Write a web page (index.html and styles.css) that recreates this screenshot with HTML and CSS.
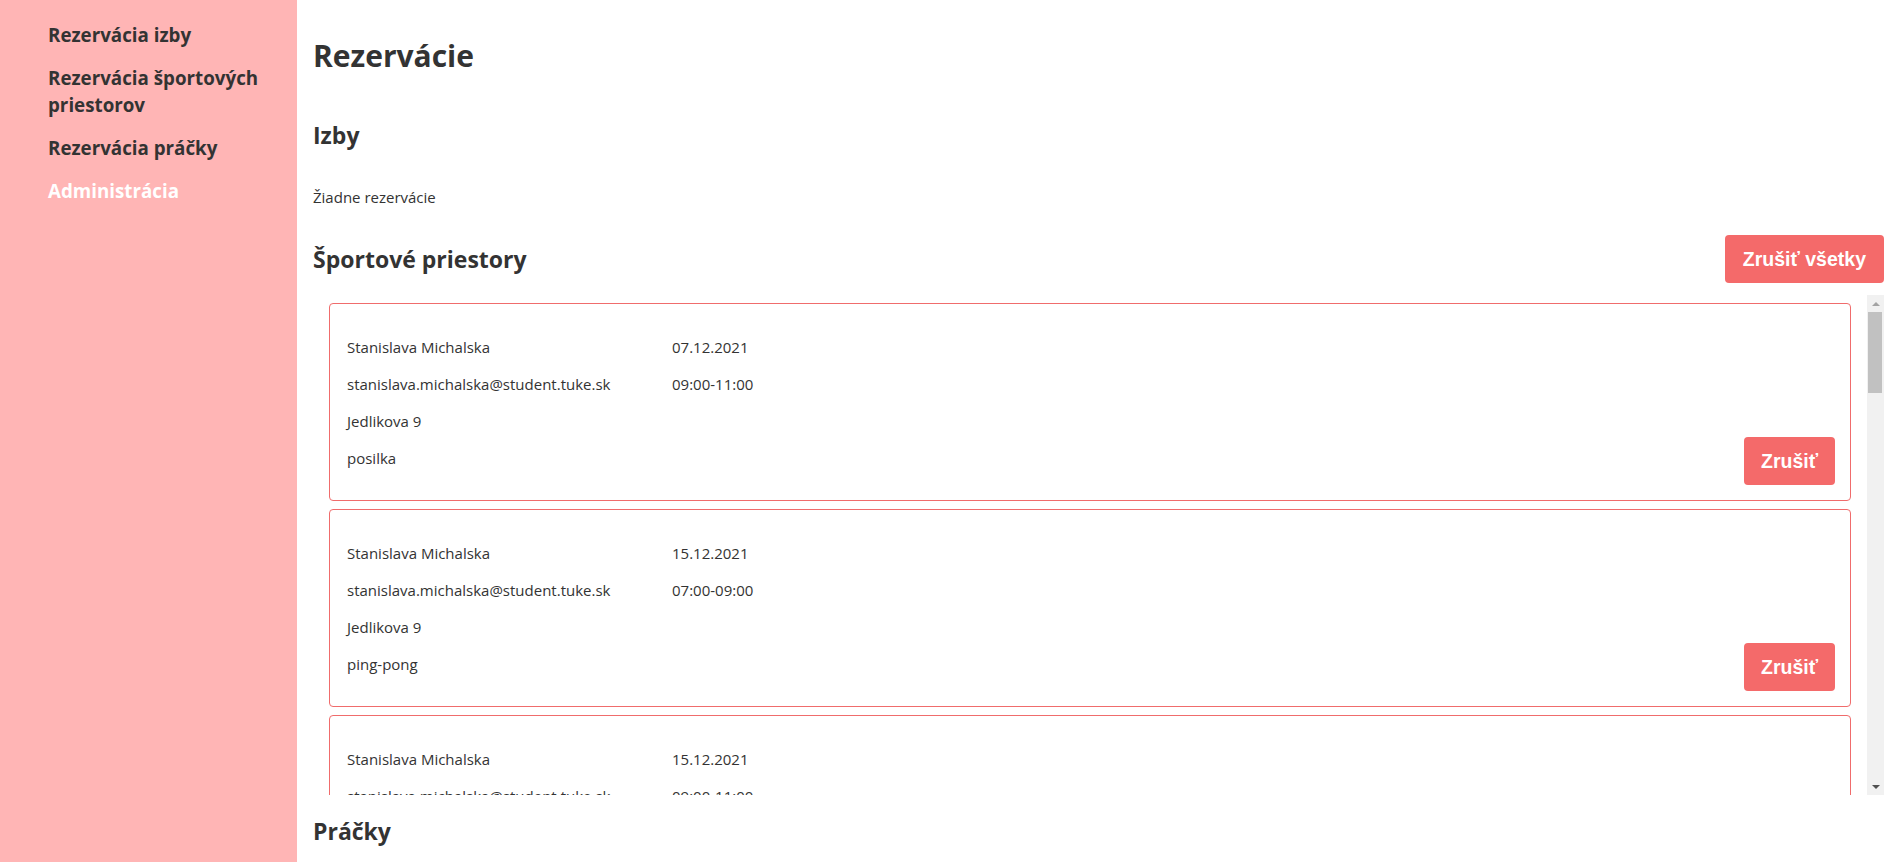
FILE: index.html
```html
<!DOCTYPE html>
<html lang="sk">
<head>
<meta charset="utf-8">
<title>Rezervácie</title>
<link rel="stylesheet" href="styles.css">
</head>
<body>
<div class="app">
  <nav class="sidebar">
    <a class="nav-link" href="#">Rezervácia izby</a>
    <a class="nav-link" href="#">Rezervácia športových priestorov</a>
    <a class="nav-link" href="#">Rezervácia práčky</a>
    <a class="nav-link active" href="#">Administrácia</a>
  </nav>
  <main class="main">
    <h1 class="title">Rezervácie</h1>
    <h2 class="section-title first">Izby</h2>
    <p class="empty">Žiadne rezervácie</p>

    <div class="section-head">
      <h2 class="section-title">Športové priestory</h2>
      <button class="btn btn-lg">Zrušiť všetky</button>
    </div>
    <div class="list-wrap">
      <div class="list">
        <div class="card">
          <div class="info">
            <span>Stanislava Michalska</span><span>07.12.2021</span>
            <span>stanislava.michalska@student.tuke.sk</span><span>09:00-11:00</span>
            <span>Jedlikova 9</span><span></span>
            <span>posilka</span><span></span>
          </div>
          <button class="btn">Zrušiť</button>
        </div>
        <div class="card">
          <div class="info">
            <span>Stanislava Michalska</span><span>15.12.2021</span>
            <span>stanislava.michalska@student.tuke.sk</span><span>07:00-09:00</span>
            <span>Jedlikova 9</span><span></span>
            <span>ping-pong</span><span></span>
          </div>
          <button class="btn">Zrušiť</button>
        </div>
        <div class="card">
          <div class="info">
            <span>Stanislava Michalska</span><span>15.12.2021</span>
            <span>stanislava.michalska@student.tuke.sk</span><span>09:00-11:00</span>
            <span>Jedlikova 9</span><span></span>
            <span>posilka</span><span></span>
          </div>
          <button class="btn">Zrušiť</button>
        </div>
      </div>
      <div class="scrollbar" aria-hidden="true">
        <div class="sb-btn"><span class="arrow-up"></span></div>
        <div class="sb-track"><div class="sb-thumb"></div></div>
        <div class="sb-btn"><span class="arrow-down"></span></div>
      </div>
    </div>

    <h2 class="section-title last">Práčky</h2>
  </main>
</div>
</body>
</html>
```

FILE: styles.css
```css
* { box-sizing: border-box; }

html, body {
  margin: 0;
  padding: 0;
  height: 100%;
}

body {
  font-family: "Open Sans", "Noto Sans", sans-serif;
  color: #333333;
  background: #ffffff;
}

.app {
  display: grid;
  grid-template-columns: 297px 1fr;
  height: 100vh;
  overflow: hidden;
}

.sidebar {
  background: #ffb5b5;
  display: flex;
  flex-direction: column;
  gap: 15.4px;
  padding: 21.4px 12px 0 48px;
}

.nav-link {
  font-size: 18.75px;
  line-height: 27.3px;
  font-weight: 700;
  color: #333333;
  text-decoration: none;
}

.nav-link.active {
  color: #ffffff;
}

.main {
  padding: 0 8px 0 16px;
  display: flex;
  flex-direction: column;
  min-width: 0;
}

.title {
  margin: 36px 0 0;
  font-size: 30px;
  line-height: 40px;
  font-weight: 700;
}

.section-title {
  margin: 0;
  font-size: 23px;
  line-height: 32px;
  font-weight: 700;
}

.section-title.first {
  margin-top: 43px;
}

.section-title.last {
  margin-top: 20px;
}

.empty {
  margin: 34px 0 0;
  font-size: 15px;
  line-height: 24px;
}

.section-head {
  margin-top: 26px;
  display: flex;
  justify-content: space-between;
  align-items: center;
}

.btn {
  font-family: "Liberation Sans", Arial, sans-serif;
  font-weight: 700;
  font-size: 19.5px;
  color: #ffffff;
  background: #f46a6a;
  border: none;
  border-radius: 4px;
  height: 48px;
  padding: 0 17px;
  cursor: pointer;
}

.btn-lg {
  padding: 0 18px;
}

.list-wrap {
  margin-top: 12px;
  height: 500px;
  flex: none;
  display: flex;
}

.list {
  flex: 1;
  min-width: 0;
  overflow: hidden;
  padding: 8px 16px;
  display: flex;
  flex-direction: column;
  gap: 8px;
}

.card {
  flex: none;
  border: 1px solid #f06c6c;
  border-radius: 4px;
  padding: 15px;
  display: flex;
  justify-content: space-between;
  align-items: flex-end;
}

.info {
  display: grid;
  grid-template-columns: 325px auto;
  grid-auto-rows: 37px;
  padding: 10px 2px 8px;
  font-size: 15px;
  line-height: 37px;
}

.scrollbar {
  width: 17px;
  flex: none;
  background: #f1f1f1;
  display: flex;
  flex-direction: column;
}

.sb-btn {
  height: 17px;
  flex: none;
  display: flex;
  align-items: center;
  justify-content: center;
}

.arrow-up {
  width: 0;
  height: 0;
  border-left: 4px solid transparent;
  border-right: 4px solid transparent;
  border-bottom: 4px solid #a3a3a3;
}

.arrow-down {
  width: 0;
  height: 0;
  border-left: 4px solid transparent;
  border-right: 4px solid transparent;
  border-top: 4px solid #505050;
}

.sb-track {
  flex: 1;
  padding: 0 2px 0 1px;
}

.sb-thumb {
  height: 81px;
  background: #c1c1c1;
}
```
